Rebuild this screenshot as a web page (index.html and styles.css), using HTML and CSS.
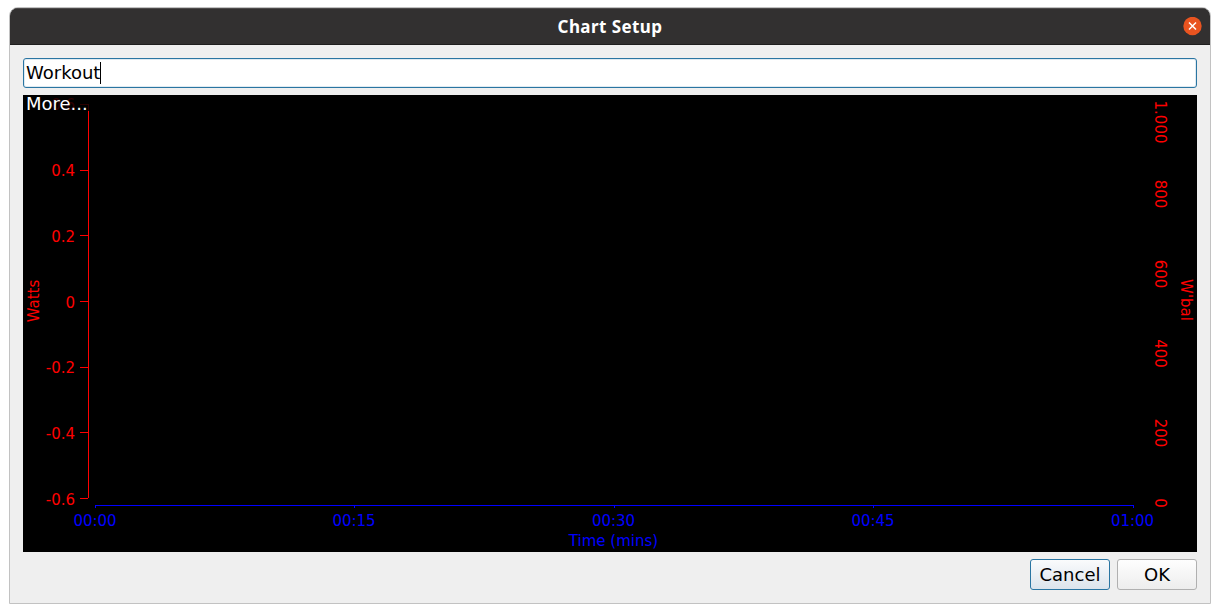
FILE: index.html
```html
<!DOCTYPE html>
<html lang="en">
<head>
<meta charset="utf-8">
<title>Chart Setup</title>
<link rel="stylesheet" href="styles.css">
</head>
<body>
<main class="dialog">
  <header class="titlebar">
    <h1 class="title">Chart Setup</h1>
    <button class="close" aria-label="Close">
      <svg width="19" height="19" viewBox="0 0 19 19"><circle cx="9.5" cy="9" r="9.2" fill="#e95420"/><path d="M6 5.5l7 7M13 5.5l-7 7" stroke="#fff" stroke-width="1.5"/></svg>
    </button>
  </header>
  <section class="content">
    <div class="field"><span>Workout</span><i class="caret"></i></div>
    <div class="chart">
      <svg class="plot" width="1174" height="457" viewBox="23 95 1174 457">
        <g class="left-axis">
          <path class="line" d="M88.5 104V498M80 104.5h8M80 170.5h8M80 235.5h8M80 301.5h8M80 367.5h8M80 432.5h8M80 498.5h8"/>
          <g text-anchor="end">
            <text x="75" y="110">0.6</text>
            <text x="75" y="176">0.4</text>
            <text x="75" y="242">0.2</text>
            <text x="75" y="308">0</text>
            <text x="75" y="373">-0.2</text>
            <text x="75" y="439">-0.4</text>
            <text x="75" y="505">-0.6</text>
          </g>
          <text class="middle" transform="translate(39 301) rotate(-90)">Watts</text>
        </g>
        <g class="right-axis middle">
          <text transform="translate(1155 122) rotate(90)">1.000</text>
          <text transform="translate(1155 194) rotate(90)">800</text>
          <text transform="translate(1155 274) rotate(90)">600</text>
          <text transform="translate(1155 353.5) rotate(90)">400</text>
          <text transform="translate(1155 433) rotate(90)">200</text>
          <text transform="translate(1155 503) rotate(90)">0</text>
          <text transform="translate(1181 300) rotate(90)">W'bal</text>
        </g>
        <g class="time-axis middle">
          <path class="line" d="M95 505.5H1134M95.5 505v3M354.5 505v3M614.5 505v3M873.5 505v3M1133.5 505v3"/>
          <text x="95" y="526">00:00</text>
          <text x="354" y="526">00:15</text>
          <text x="613.5" y="526">00:30</text>
          <text x="873" y="526">00:45</text>
          <text x="1132.5" y="526">01:00</text>
          <text x="613.5" y="546">Time (mins)</text>
        </g>
      </svg>
      <span class="more">More...</span>
    </div>
    <footer class="actions">
      <button class="btn focused">Cancel</button>
      <button class="btn">OK</button>
    </footer>
  </section>
</main>
</body>
</html>
```
FILE: styles.css
```css
* { box-sizing: border-box; }
body { margin: 0; height: 613px; padding: 7px 9px; background: #fff; font-family: "DejaVu Sans", sans-serif; font-size: 18px; color: #000; overflow: hidden; }
.dialog { width: 1202px; height: 597px; border: 1px solid #c2c2c2; border-radius: 9px 9px 0 0; background: #efefef; overflow: hidden; }
.titlebar { display: grid; grid-template-columns: 1fr auto 1fr; align-items: center; height: 37px; padding: 0 8px; background: #323030; border-top: 1px solid #4d4b4b; border-bottom: 1px solid #1f1e1e; }
.title { grid-column: 2; margin: 0; font: bold 17px/34px "Noto Sans", sans-serif; color: #fff; letter-spacing: 0.42px; }
.close { justify-self: end; width: 19px; height: 19px; padding: 0; border: 0; background: none; }
.close svg { display: block; }
.content { padding: 13px 13px 0; }
.field { display: flex; align-items: center; height: 30px; padding: 0 2px; border: 1px solid #2a75a2; border-radius: 3px; background: #fff; box-shadow: inset 0 0 0 1px #dfeaf1; line-height: 28px; }
.caret { width: 1px; height: 22px; background: #000; }
.chart { position: relative; height: 457px; margin-top: 7px; background: #000; }
.plot { display: block; font-size: 15px; }
.left-axis, .right-axis { fill: #f00; stroke: none; }
.time-axis { fill: #00f; }
.line { fill: none; stroke-width: 1; }
.left-axis .line { stroke: #f00; }
.time-axis .line { stroke: #00f; }
.middle { text-anchor: middle; }
.more { position: absolute; left: 0; top: 0; width: 67px; height: 16px; padding-left: 3px; line-height: 17px; color: #fff; background: rgba(0, 0, 0, 0.83); white-space: nowrap; }
.actions { display: flex; justify-content: flex-end; gap: 7px; margin-top: 7px; }
.btn { width: 80px; height: 31px; padding: 0; border: 1px solid #b0b0b0; border-radius: 3px; background: linear-gradient(#fefefe, #ededed); font: inherit; color: #000; }
.btn.focused { border-color: #2a75a2; background: linear-gradient(#fafbfc, #dce4ec); }
```
